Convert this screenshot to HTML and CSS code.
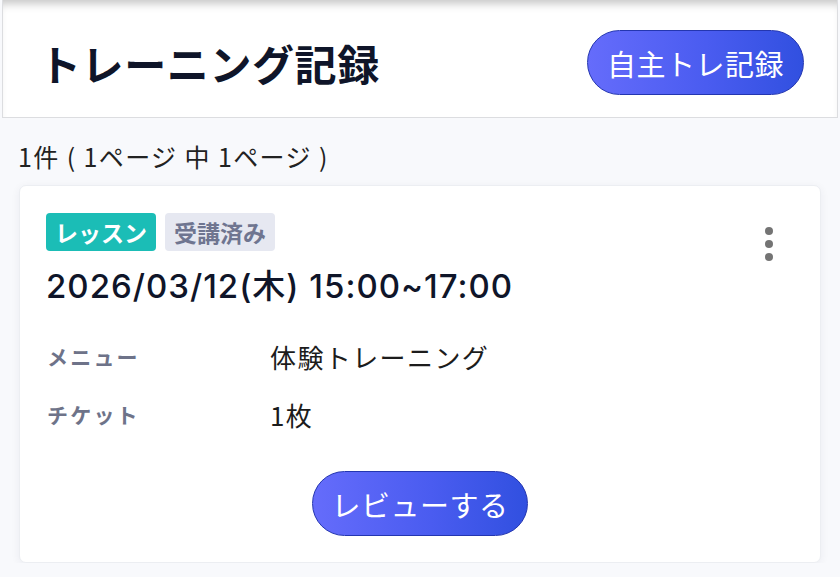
FILE: index.html
```html
<!DOCTYPE html>
<html lang="ja">

<head>
  <meta charset="UTF-8">
  <title>トレーニング記録</title>
  <link rel="stylesheet" href="styles.css">
</head>

<body>
  <header class="page-header">
    <h1 class="page-title">トレーニング記録</h1>
    <button class="pill-btn header-btn">自主トレ記録</button>
  </header>

  <main class="content">
    <p class="count">1件 ( 1ページ 中 1ページ )</p>

    <div class="record-card">
      <div class="card-top">
        <div class="card-head">
          <div class="tags">
            <span class="tag tag-lesson">レッスン</span>
            <span class="tag tag-done">受講済み</span>
          </div>
          <div class="record-date">2026/03/12(木) 15:00~17:00</div>
        </div>
        <button class="more-btn" aria-label="メニュー">
          <span class="dot"></span>
          <span class="dot"></span>
          <span class="dot"></span>
        </button>
      </div>

      <dl class="details">
        <div class="detail-row">
          <dt>メニュー</dt>
          <dd>体験トレーニング</dd>
        </div>
        <div class="detail-row">
          <dt>チケット</dt>
          <dd>1枚</dd>
        </div>
      </dl>

      <div class="card-actions">
        <button class="pill-btn review-btn">レビューする</button>
      </div>
    </div>
  </main>
</body>

</html>
```

FILE: styles.css
```css
body {
  margin: 0;
  background-color: #f8f9fc;
  font-family: "Inter", "Noto Sans CJK JP", sans-serif;
  color: #0f1529;
}

.page-header {
  display: flex;
  justify-content: space-between;
  align-items: center;
  height: 109px;
  margin: 0 2px;
  padding: 8px 33px 0 36px;
  background-color: #fff;
  border: 1px solid #dcdde0;
  border-top: none;
  box-shadow: inset 0 9px 8px -5px rgba(0, 0, 0, 0.22);
}

.page-title {
  margin: 0;
  font-size: 42px;
  font-weight: 700;
  letter-spacing: 0.6px;
  color: #0f1529;
}

.pill-btn {
  font-family: "Noto Sans CJK JP", sans-serif;
  color: #fff;
  border: 1px solid #2436b0;
  border-radius: 40px;
  background: linear-gradient(90deg, #656cfb 0%, #4a5cf0 55%, #3150e0 100%);
  cursor: pointer;
}

.header-btn {
  width: 217px;
  height: 65px;
  font-size: 29px;
  padding: 0;
  letter-spacing: 0.5px;
}

.content {
  padding: 0 19px;
}

.count {
  margin: 21px 0 12px -1px;
  font-family: "Noto Sans CJK JP", sans-serif;
  font-size: 25px;
  letter-spacing: 1.4px;
  color: #222;
  line-height: 34px;
}

.record-card {
  background-color: #fff;
  border: 1px solid #eceef2;
  border-radius: 7px;
  box-shadow: 0 2px 10px rgba(30, 40, 70, 0.06);
  padding: 27px 26px 26px 26px;
}

.card-top {
  display: flex;
  justify-content: space-between;
  align-items: flex-start;
}

.tags {
  display: flex;
  gap: 9px;
}

.tag {
  display: inline-block;
  height: 38px;
  line-height: 38px;
  padding: 0 9px;
  border-radius: 4px;
  font-family: "Noto Sans CJK JP", sans-serif;
  font-size: 23px;
  font-weight: 700;
}

.tag-lesson {
  background-color: #1bbdb6;
  color: #fff;
}

.tag-done {
  background-color: #e6e8f1;
  color: #6f7590;
}

.record-date {
  margin-top: 13px;
  font-size: 33px;
  font-weight: 500;
  letter-spacing: 1px;
  line-height: 44px;
  color: #0f1529;
}

.more-btn {
  display: flex;
  flex-direction: column;
  align-items: center;
  gap: 5px;
  margin: 14px 21px 0 0;
  padding: 0;
  border: none;
  background: none;
}

.dot {
  width: 8px;
  height: 8px;
  border-radius: 50%;
  background-color: #747474;
}

.details {
  margin: 19px 0 0 0;
}

.detail-row {
  display: flex;
  align-items: center;
  height: 58px;
}

.detail-row dt {
  width: 223px;
  padding-left: 1px;
  font-family: "Noto Sans CJK JP", sans-serif;
  font-size: 21px;
  font-weight: 700;
  letter-spacing: 2.2px;
  color: #6e7389;
}

.detail-row dd {
  margin: 0;
  font-family: "Noto Sans CJK JP", sans-serif;
  font-size: 26px;
  font-weight: 400;
  letter-spacing: 1.4px;
  color: #1c1c1c;
}

.card-actions {
  display: flex;
  justify-content: center;
  margin-top: 28px;
}

.review-btn {
  width: 216px;
  height: 65px;
  font-size: 29px;
  padding: 0;
  letter-spacing: 0.5px;
}
```
